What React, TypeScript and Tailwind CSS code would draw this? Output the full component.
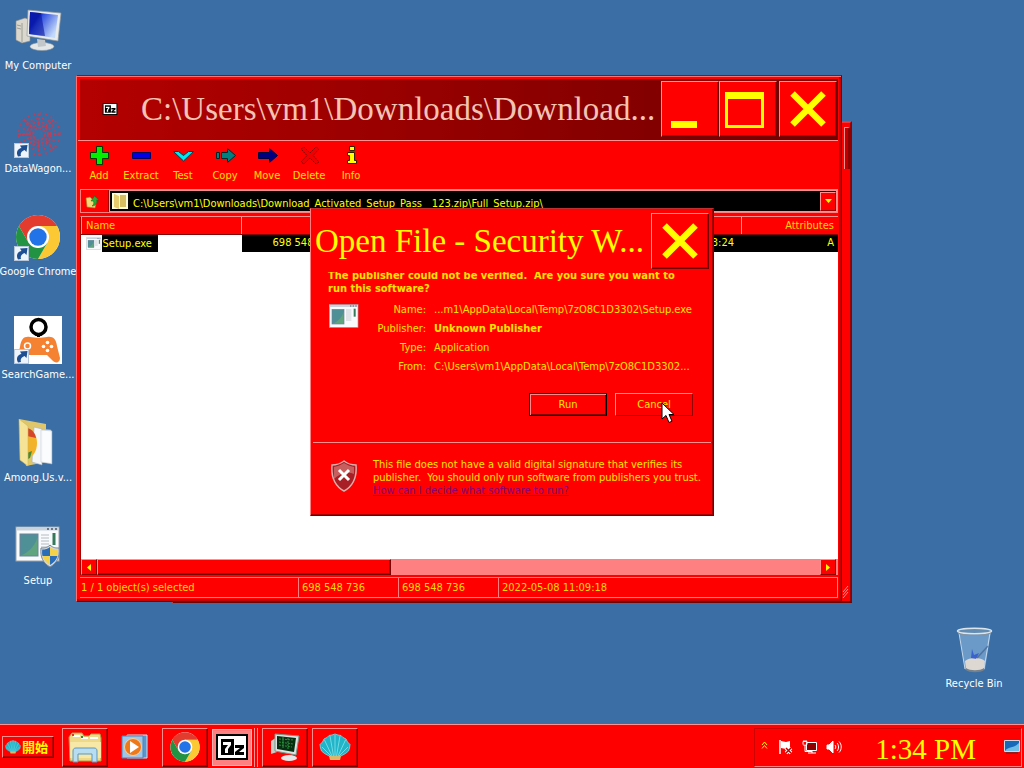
import type { ReactNode } from 'react';

const raised = 'border border-t-[#ff9090] border-l-[#ff9090] border-r-[#900000] border-b-[#900000] bg-[#ff0000]';
const outset = 'border border-t-[#ff9090] border-l-[#ff9090] border-r-[#700000] border-b-[#700000] bg-[#ff0000] shadow-[inset_-1px_-1px_0_#b80000]';

function Shortcut() {
  return (
    <g>
      <rect x="0.5" y="33.5" width="14" height="14" fill="#eef4fb" stroke="#b7c6d8" />
      <path d="M4 46.500C1.500 42 4 38.500 7.500 38L6 35.500l7.500-.5-1 7-2-2C8 41 6 43 7 46z" fill="#1f4f93" />
    </g>
  );
}

function ChromeMark() {
  return (
    <g>
      <circle cx="24" cy="24" r="22" fill="#fff" />
      <path d="M24 13H43.050A22 22 0 0 1 24 46L33.500 29.500z" fill="#fcc934" />
      <path d="M4.950 13A22 22 0 0 1 43.050 13H24L14.500 29.500z" fill="#e33b2e" />
      <path d="M4.950 13 14.500 29.500 24 35 33.500 29.500 24 46A22 22 0 0 1 4.950 13z" fill="#229342" />
      <circle cx="24" cy="24" r="11" fill="#fff" />
      <circle cx="24" cy="24" r="8.700" fill="#2272e8" />
    </g>
  );
}

function ComputerIcon() {
  return (
    <svg viewBox="0 0 48 48" className="size-12">
      <defs>
        <linearGradient id="screen" x1="0" x2="1" y2="0.6">
          <stop offset="0.300" stopColor="#0a1fc0" />
          <stop offset="0.420" stopColor="#3353e0" />
          <stop offset="1" stopColor="#c4dafa" />
        </linearGradient>
      </defs>
      <path d="M2 14l9-3 5 2v21l-8 2-6-3z" fill="#dad8ce" stroke="#8d8f8c" strokeWidth=".6" />
      <path d="M8 16v19M3 18l4 1M3 21l4 1" stroke="#8b8f88" strokeWidth=".8" />
      <ellipse cx="28" cy="39.500" rx="12" ry="4" fill="#e4e7e8" stroke="#8f9799" strokeWidth=".6" />
      <path d="M23 32l8 1 1 6-8 1z" fill="#c2c8ca" />
      <path d="M14 3l33 3-3 28-31-5z" fill="#e8ebeb" stroke="#8f979b" strokeWidth=".7" />
      <path d="M16 5l28 3-3 23-26-4z" fill="url(#screen)" />
      <path d="M16 5l11 1 4 23-16-2z" fill="#08159f" opacity=".6" />
    </svg>
  );
}

function WagonIcon() {
  const rings = [6, 9, 12, 16, 20.5];
  return (
    <svg viewBox="0 0 48 48" className="size-12">
      <g fill="none" stroke="#cc3a50">
        {rings.map((r, i) => (
          <circle key={r} cx="25" cy="24" r={r} strokeWidth={i < 3 ? 2 : 2.2} strokeDasharray={i < 3 ? '3 1.5' : '2 4'} opacity={i < 3 ? 0.75 : 0.8} />
        ))}
        <path d="M25 3v11M25 34v11M4 24h11M35 24h11M10 9l8 8M32 31l8 8M40 9l-8 8M18 31l-8 8" strokeWidth="1.500" strokeDasharray="3 1.500" />
      </g>
      <Shortcut />
    </svg>
  );
}

function GameIcon() {
  return (
    <svg viewBox="0 0 48 48" className="size-12">
      <rect width="48" height="48" fill="#fff" />
      <path d="M6 31c1-8 4-11 10-10 5 1 12 1 17 0 6-1 9 2 10 9l3 12c0 5-5 6-8 2l-5-5H15l-6 6C5 48 2 45 3 42z" fill="#f58233" />
      <circle cx="24.500" cy="11" r="7.500" fill="none" stroke="#000" strokeWidth="3.500" />
      <path d="M24.500 17v4" stroke="#000" strokeWidth="3" />
      <circle cx="13.500" cy="30" r="3" fill="none" stroke="#fff" strokeWidth="1.500" />
      <g fill="#fff"><circle cx="33.500" cy="26.500" r="1.800" /><circle cx="33.500" cy="34.500" r="1.800" /><circle cx="29.500" cy="30.500" r="1.800" /><circle cx="37.500" cy="30.500" r="1.800" /></g>
      <Shortcut />
    </svg>
  );
}

function FolderIcon() {
  return (
    <svg viewBox="0 0 48 48" className="size-12">
      <path d="M5 0l27 5v38L12 47z" fill="#dfc66a" />
      <path d="M25 10l12 1v33l-12-1z" fill="#e9edf2" stroke="#a5b0bd" strokeWidth=".6" />
      <path d="M20 8l8 2v36l-10-3z" fill="#f4f6f8" stroke="#a5b0bd" strokeWidth=".6" />
      <path d="M13 9c7 2 10 8 10 15s-3 14-10 15z" fill="#f2b229" />
      <path d="M13 9c5 1 8 5 9 10l-9-2z" fill="#d5452b" />
      <path d="M13 34l5-2-2 7-4 2z" fill="#498b34" />
      <path d="M5 0l9 7v40l-8-6z" fill="#f5e498" stroke="#cdb75c" strokeWidth=".6" />
      <path d="M27 11l11 1v33l-11-2z" fill="#fff" stroke="#b7c1cc" strokeWidth=".5" opacity=".85" />
    </svg>
  );
}

function ProgramArt() {
  return (
    <g>
      <rect x="2" y="8" width="43" height="34" fill="#f8fafb" stroke="#98a3ad" />
      <rect x="2.500" y="8.500" width="42" height="3" fill="#c9d3de" />
      <path d="M33 10h2m2 0h2m2 0h2" stroke="#4c5a6a" strokeWidth="1.500" />
      <rect x="6" y="15" width="18" height="22" fill="#4f8f96" stroke="#6f829b" />
      <path d="M6.500 36.500c8-3 14-9 17-18v18z" fill="#5fa37f" />
      <path d="M27 16h8M27 19h8M27 22h8M27 25h8M27 28h8M27 31h8" stroke="#b4bcc4" />
      <path d="M40 14v12" stroke="#35785a" strokeWidth="3" />
    </g>
  );
}

function SetupIcon() {
  return (
    <svg viewBox="0 3 48 48" className="size-12">
      <ProgramArt />
      <path d="M36 26c3 3 6 3 9 3 1 9-2 15-9 19-7-4-10-10-9-19 3 0 6 0 9-3z" fill="#d3d9df" stroke="#7a8793" />
      <path d="M36 28v9h-7.500c-.5-2-.5-4-.3-6.500 3 0 5.500-.5 7.800-2.500zM36 37h7.500c-1 4-4 7-7.500 9z" fill="#2b6db6" />
      <path d="M36 28v9h7.500c.5-2 .5-4 .3-6.500-3 0-5.500-.5-7.800-2.500zM36 37h-7.500c1 4 4 7 7.500 9z" fill="#f4d24a" />
    </svg>
  );
}

function BinIcon() {
  return (
    <svg viewBox="0 0 48 48" className="size-12">
      <path d="M9 6h32l-6 38c-1 3-19 3-20 0z" fill="#9cc3ec" opacity=".5" />
      <path d="M15 36c4-4 16-4 20 0l-1 8c-3 3-16 3-18 0z" fill="#ddd8d2" />
      <path d="M9 8l6 36M40 8l-6 36" stroke="#c4d9ec" strokeWidth="1" />
      <path d="M16 43c4 3 14 3 18 0v2c-3 3-15 3-18 0z" fill="#77818a" />
      <path d="M22 24l2 6 5-2-3 6-5-1z" fill="#2a4fd0" opacity=".75" />
      <path d="M38 21L27 33" stroke="#46658c" strokeWidth="1.500" opacity=".7" />
      <ellipse cx="24.500" cy="6" rx="17" ry="2.800" fill="#638cb3" stroke="#dce5ec" strokeWidth="1.500" />
      <path d="M8 8c6 3 26 3 33 0" fill="none" stroke="#8a9299" />
    </svg>
  );
}

function ShellIcon({ className }: { className: string }) {
  return (
    <svg viewBox="0 0 32 32" className={className}>
      <path d="M16 3l3 1 3 .5 2 2 3 1.500 1.500 3L31 13.500l-.5 3.500-1 3-3 2.500L20 26h-8l-6.500-3.500-3-2.500-1-3L1 13.500 3.500 11 5 8l3-1.500 2-2 3-.5z" fill="#22b4c8" stroke="#7fdde4" strokeWidth=".8" />
      <path d="M16 25V4M14.500 25 11 5M13 25 5.500 9M12 25 3 16M17.500 25 21 5M19 25 26.500 9M20 25 29 16" stroke="#85e6ec" strokeWidth=".8" />
      <path d="M10 25h12l-1 4H11z" fill="#d9b86a" />
    </svg>
  );
}

function SevenZip({ className }: { className: string }) {
  return (
    <svg viewBox="0 0 32 26" className={className}>
      <rect x="1" y="1" width="30" height="24" fill="#fff" stroke="#000" strokeWidth="2" />
      <rect x="5" y="5" width="13" height="16" fill="#000" />
      <path d="M7 8h8v3l-3 4v4H9v-4l3-4H7z" fill="#fff" />
      <path d="M19 11h9v3l-5 4h5v3h-9v-3l5-4h-5z" fill="#000" />
    </svg>
  );
}

function DesktopIcon({ label, children }: { label: string; children: ReactNode }) {
  return (
    <button className="flex h-[103px] w-[76px] flex-col items-center gap-1">
      {children}
      <span className="whitespace-nowrap text-[11px] leading-[14px] text-white">{label}</span>
    </button>
  );
}

function CloseGlyph() {
  return (
    <svg viewBox="0 0 36 36" className="size-9">
      <path d="M2.500 2.500l31 31M33.500 2.500L2.500 33.500" stroke="#ff0" strokeWidth="6.500" />
    </svg>
  );
}

const tools: { name: string; art: ReactNode }[] = [
  { name: 'Add', art: <path d="M9.500 1.500h6v6h6v6h-6v6h-6v-6h-6v-6h6z" fill="#00f000" stroke="#003800" /> },
  { name: 'Extract', art: <path d="M3.500 7.500h18v6h-18z" fill="#0000e8" stroke="#000060" /> },
  { name: 'Test', art: <path d="M2.500 6.500h5l5 4 5-4h5l-10 9.500z" fill="#00e8f0" stroke="#004050" /> },
  { name: 'Copy', art: <path d="M3.500 7.500h3v6h-3zm5 0h6v-4l8 7-8 7v-4h-6z" fill="#008080" stroke="#002828" /> },
  { name: 'Move', art: <path d="M3.500 7.500h11v-4l8 7-8 7v-4h-11z" fill="#000080" stroke="#000040" /> },
  { name: 'Delete', art: <path d="M4 4l3-2 6 6 6-6 3 2-6 6.500L22 17l-3 2-6-6-6 6-3-2 6-6.500z" fill="#f00000" stroke="#800000" strokeDasharray="2 1" /> },
  { name: 'Info', art: <g fill="#ff0" stroke="#302000"><path d="M10.500 1.500h5v4h-5z" /><path d="M8.500 7.500h7v8h2v3h-9v-3h2v-5h-2z" /></g> },
];

function ArchiveWindow() {
  return (
    <section className="absolute left-[76px] top-[75px] flex h-[527px] w-[766px] flex-col border border-l-[#ff7070] border-t-[#b00020] border-r-[#800000] border-b-[#800000] bg-[#ff0000] p-[3px] shadow-[inset_0_1px_0_#ff7070,inset_-2px_-2px_0_#c00000]">
      <header className="flex h-[61px] items-center bg-linear-to-r from-[#b40000] to-[#740000] pb-0.5 pr-px">
        <SevenZip className="ml-[22px] mr-[23px] h-3 w-4 shrink-0" />
        <h1 className="min-w-0 flex-1 overflow-hidden whitespace-nowrap font-['Liberation_Serif',serif] text-[33px] leading-[56px] text-[#f3c4b4]">C:\Users\vm1\Downloads\Download...</h1>
        <button aria-label="Minimize" className={`flex h-14 w-[58px] shrink-0 items-center ${outset}`}>
          <svg viewBox="0 0 56 54" className="h-[54px] w-14"><path d="M9 39h26v7H9z" fill="#ff0" /></svg>
        </button>
        <button aria-label="Maximize" className={`flex h-14 w-[58px] shrink-0 items-center ${outset}`}>
          <svg viewBox="0 0 56 54" className="h-[54px] w-14"><path d="M5 10h39v36H5zM8 17v26h33V17z" fill="#ff0" fillRule="evenodd" /></svg>
        </button>
        <button aria-label="Close" className={`ml-0.5 flex h-14 w-[58px] shrink-0 items-center justify-center ${outset}`}><CloseGlyph /></button>
      </header>
      <nav className="-ml-0.5 flex h-[49px] border-t border-[#ff9090] pt-1">
        {tools.map((t) => (
          <button key={t.name} className="flex w-[42px] flex-col items-center gap-0.5 text-[11px] text-[#ffe000]">
            <svg viewBox="0 0 24 21" className="h-[21px] w-6">{t.art}</svg>
            <span className="leading-4">{t.name}</span>
          </button>
        ))}
      </nav>
      <div className="flex h-6 border border-[#ff8080]">
        <button aria-label="Up" className="flex w-7 items-center justify-center border-r border-[#a00000]">
          <svg viewBox="0 0 16 16" className="mr-1 size-4"><path d="M1 5l4-1 2 2h5l-2 9-8-1z" fill="#f3d778" stroke="#a77c20" strokeWidth=".6" /><path d="M7 13c2-1 2-3 1.500-5H6l3.500-5L14 7h-2.500c.5 3-1 6-4.500 6z" fill="#28ac32" stroke="#0c6420" strokeWidth=".5" /></svg>
        </button>
        <div className="flex min-w-0 flex-1 items-center border border-[#ff9090] bg-black">
          <svg viewBox="0 0 16 16" className="ml-0.5 size-4 shrink-0"><path d="M0 0h16v16H0z" fill="#fffbd8" /><path d="M2 1l5 2v13l-5-2z" fill="#e7cb6c" /><path d="M8 2h6v12H8z" fill="#d6bd62" /></svg>
          <input aria-label="Path" readOnly value="C:\Users\vm1\Downloads\Download_Activated_Setup_Pass__123.zip\Full_Setup.zip\" className="h-full min-w-0 flex-1 bg-black pl-[5px] pt-1 text-[11px] text-[#ff0] outline-none" />
          <button aria-label="Show paths" className={`flex h-[19px] w-4 items-center justify-center ${raised}`}><svg viewBox="0 0 7 4" className="h-1 w-[7px]"><path d="M0 0h7L3.500 4z" fill="#ff0" /></svg></button>
        </div>
      </div>
      <div className="mt-[3px] flex min-h-0 flex-1 flex-col border-t border-l border-t-[#ff9090] border-l-[#a00000] bg-white">
        <table className="w-full table-fixed border-collapse text-[11px]">
          <colgroup><col className="w-[160px]" /><col className="w-[100px]" /><col /><col className="w-[97px]" /></colgroup>
          <thead>
            <tr className="h-[17px] bg-[#ff0000] text-[#ffd800]">
              {['Name', '', '', 'Attributes'].map((h, i) => (
                <th key={i} className={`border-l border-b border-l-[#ff9090] border-b-[#800000] p-0 pt-0.5 font-normal leading-[14px] ${i === 0 ? 'pl-1 text-left' : 'pr-1 text-right'}`}>{h}</th>
              ))}
            </tr>
          </thead>
          <tbody>
            <tr className="h-[17px] text-[#ff0]">
              <td className="p-0">
                <div className="flex items-center pl-1">
                  <svg viewBox="0 7 48 36" className="h-[13px] w-4"><ProgramArt /></svg>
                  <span className="bg-black pl-px pr-1.5 leading-[17px]">Setup.exe</span>
                </div>
              </td>
              <td className="bg-black p-0 pr-1.5 text-right">698 548 736</td>
              <td className="bg-black p-0 pr-[7px] text-right">13:24</td>
              <td className="bg-black p-0 pr-1 text-right">A</td>
            </tr>
          </tbody>
        </table>
        <div className="mt-auto flex h-4 bg-[#ff8080]">
          <button aria-label="Scroll left" className={`flex w-4 items-center justify-center ${raised}`}><svg viewBox="0 0 4 7" className="h-[7px] w-1"><path d="M4 0v7L0 3.500z" fill="#ff0" /></svg></button>
          <div className={`w-[294px] ${outset}`} />
          <button aria-label="Scroll right" className={`ml-auto mr-0.5 flex w-4 items-center justify-center ${raised}`}><svg viewBox="0 0 4 7" className="h-[7px] w-1"><path d="M0 0v7l4-3.500z" fill="#ff0" /></svg></button>
        </div>
      </div>
      <footer className="mt-0.5 flex h-[21px] items-center border-y border-[#ff8080] text-[11px] leading-[19px] text-[#ffd800]">
        <span className="w-[218px] pl-px">1 / 1 object(s) selected</span>
        <span className="w-[100px] border-l border-[#ff8080] pl-[3px]">698 548 736</span>
        <span className="w-[100px] border-l border-[#ff8080] pl-[3px]">698 548 736</span>
        <span className="flex-1 border-x border-[#ff8080] pl-[3px]">2022-05-08 11:09:18</span>
      </footer>
    </section>
  );
}

function SecurityDialog() {
  const rows = [
    ['Name:', '...m1\\AppData\\Local\\Temp\\7zO8C1D3302\\Setup.exe'],
    ['Publisher:', 'Unknown Publisher'],
    ['Type:', 'Application'],
    ['From:', 'C:\\Users\\vm1\\AppData\\Local\\Temp\\7zO8C1D3302...'],
  ];
  return (
    <section role="dialog" aria-label="Open File - Security Warning" className="absolute left-[310px] top-[208px] h-[308px] w-[404px] border border-t-[#c03030] border-l-[#ff8080] border-r-[#700000] border-b-[#700000] bg-[#ff0000] p-0.5 text-[11px] leading-[13px] text-[#ffe400] shadow-[inset_-1px_-1px_0_#a00000]">
      <header className="flex h-[61px] items-center pb-0.5 pr-0.5">
        <h2 className="min-w-0 flex-1 whitespace-nowrap pl-0.5 font-['Liberation_Serif',serif] text-[33px] leading-[56px] text-[#ff0]">Open File - Security W...</h2>
        <button aria-label="Close" className={`flex h-14 w-[58px] shrink-0 items-center justify-center ${outset}`}><CloseGlyph /></button>
      </header>
      <div className="flex h-[23px] items-end overflow-hidden pl-[15px]">
        <p className="font-bold">The publisher could not be verified.&nbsp; Are you sure you want to<br />run this software?</p>
      </div>
      <div className="flex pl-[15px] pt-[5px]">
        <svg viewBox="0 7 48 36" className="mt-1 h-6 w-8 shrink-0"><ProgramArt /></svg>
        <dl className="ml-2.5 grid flex-1 grid-cols-[56px_1fr] gap-x-2">
          {rows.map(([k, v], i) => (
            <div key={k} className="contents">
              <dt className="flex h-[19px] items-center justify-end">{k}</dt>
              <dd className={`flex h-[19px] items-center whitespace-nowrap ${i === 1 ? 'font-bold' : ''}`}>{v}</dd>
            </div>
          ))}
        </dl>
      </div>
      <div className="mt-[17px] flex justify-end gap-2 pr-[18px]">
        <button className="h-[23px] w-[78px] border border-black shadow-[inset_1px_1px_0_#ff9090,inset_-1px_-1px_0_#800000]">Run</button>
        <button className={`h-[23px] w-[78px] ${raised}`}>Cancel</button>
      </div>
      <div className="mt-[26px] flex gap-4 border-t border-[#ff9090] pl-[18px] pt-[15px]">
        <svg viewBox="0 0 26 32" className="mt-0.5 h-8 w-[26px] shrink-0">
          <path d="M13 1c4 3 7 4 12 4 1 12-3 21-12 26C4 26 0 17 1 5c5 0 8-1 12-4z" fill="#a81f25" stroke="#d8b0ac" strokeWidth="1.500" />
          <path d="M13 3c3 2 6 3 10 4v7C16 11 8 14 3 19V7c4-1 7-2 10-4z" fill="#d47a78" opacity=".7" />
          <path d="M8 10l10 10M18 10L8 20" stroke="#fff" strokeWidth="3" />
        </svg>
        <p className="whitespace-nowrap">
          This file does not have a valid digital signature that verifies its<br />publisher.&nbsp; You should only run software from publishers you trust.<br />
          <a href="#help" className="text-[#800080] underline">How can I decide what software to run?</a>
        </p>
      </div>
    </section>
  );
}

function Taskbar() {
  const task = 'flex h-[39px] w-[46px] shrink-0 items-center justify-center';
  return (
    <footer className="flex h-11 shrink-0 items-center border-t border-[#ff9090] bg-[#ff0000] px-0.5 pt-px shadow-[0_-1px_0_#c04040]">
      <button className={`flex h-[22px] w-[52px] items-center gap-px pl-0.5 font-['Noto_Sans_CJK_JP',sans-serif] text-[13px] font-bold leading-5 text-[#ff0] ${outset}`}>
        <ShellIcon className="size-4 shrink-0" /><span className="whitespace-nowrap">開始</span>
      </button>
      <div className="ml-2 flex items-center gap-1">
        <button aria-label="Explorer" className={`${task} ${outset}`}>
          <svg viewBox="0 0 34 34" className="size-[34px]"><path d="M1 7l3-4h10l2 3h5l2-2h9l1 4v23H2z" fill="#eed889" stroke="#b69945" /><path d="M5 6h7M13 8h7M22 8h8" stroke="#fff" strokeWidth="2" /><path d="M4 5h2" stroke="#d33" strokeWidth="2" /><path d="M13 7h2" stroke="#383" strokeWidth="2" /><path d="M2 12h31v16H2z" fill="#f7e8a8" /><path d="M5 21c0-2 1-3 3-3h18c2 0 3 1 3 3v11h-5v-8H10v8H5z" fill="#b8dcf0" stroke="#5e98bd" /></svg>
        </button>
        <button aria-label="Media Player" className={`${task} border border-transparent`}>
          <svg viewBox="0 0 28 28" className="size-7"><path d="M6 2h20v23H6z" fill="#5a96cc" stroke="#cfe3f2" /><path d="M1 3h21v22H1z" fill="#9fc6e6" stroke="#4d86b8" /><circle cx="12" cy="14" r="8.500" fill="#ee7919" stroke="#f8d0a0" /><path d="M9 8l9 6-9 6z" fill="#fff" /></svg>
        </button>
        <button aria-label="Google Chrome" className={`${task} ${outset}`}><svg viewBox="0 0 48 48" className="size-8"><ChromeMark /></svg></button>
      </div>
      <div className="ml-1 flex h-[39px] items-center gap-0.5">
        <button aria-label="7-Zip" className="flex h-[37px] w-10 items-center justify-center border border-[#ffb0b0] bg-[#ff8080]"><SevenZip className="h-[26px] w-8" /></button>
        <span className="h-full w-1 border-x border-[#ff9090]" />
      </div>
      <div className="ml-1 flex gap-1">
        <button aria-label="System Monitor" className={`${task} ${outset}`}>
          <svg viewBox="0 0 32 32" className="size-8"><path d="M2 10l6-4v15l-6 2z" fill="#c9cbc5" /><ellipse cx="20" cy="27" rx="8" ry="3" fill="#e4e6e8" /><path d="M6 3l24 2-3 19-21-4z" fill="#dde2e2" stroke="#798" /><path d="M8 5l19 2-2 14-17-3z" fill="#082e12" /><path d="M10 8l15 1M10 11l14 2M10 14l13 2M14 6v12M19 7v12" stroke="#2b8d3c" strokeDasharray="2 1" /></svg>
        </button>
        <button aria-label="Shell" className={`${task} ${outset}`}><ShellIcon className="size-8" /></button>
      </div>
      <div className="ml-auto flex h-[39px] w-[268px] items-center border border-[#ff8080] border-l-[#d00000] border-t-[#d00000] pl-[6px] pr-px">
        <button aria-label="Show hidden icons"><svg viewBox="0 0 7 8" className="mb-1 h-2 w-[7px]"><path d="M1 4l2.500-3L6 4M1 7.500l2.500-3 2.500 3" fill="none" stroke="#ff0" /></svg></button>
        <svg viewBox="0 0 16 16" className="ml-2.5 size-4"><path d="M2 1v14" stroke="#fff" strokeWidth="1.500" /><path d="M3 2l5 1 4-1v7l-4 1-5-1z" fill="#fff" /><path d="M8 9l5 5M13 9l-5 5" stroke="#fff" strokeWidth="3.500" /><path d="M8 9l5 5M13 9l-5 5" stroke="#c00000" strokeWidth="1.500" /></svg>
        <svg viewBox="0 0 16 16" className="ml-2 size-4" fill="none" stroke="#fff"><path d="M4.500 3.500h10v8h-10z" fill="#900000" /><path d="M1 2.500h4v3c0 1-4 1-4 0zM2 1v1.500M4 1v1.500M3 6v6.500h7M6 14h8M10 12v2" /></svg>
        <svg viewBox="0 0 16 16" className="ml-2 size-4" fill="none" stroke="#fff"><path d="M1 6h2l4-4v12l-4-4H1z" fill="#fff" /><path d="M9 6c1 1 1 3 0 4M11 4c2 2 2 6 0 8M13 2.500c3 3 3 8 0 11" /></svg>
        <time className="ml-auto mr-7 pt-1 font-['Liberation_Serif',serif] text-[29px] leading-8 text-[#ff0]">1:34 PM</time>
        <button aria-label="Show desktop"><svg viewBox="0 0 16 14" className="h-3.5 w-4"><path d="M.5 .5h15v11H.5z" fill="#1768b8" stroke="#cbd9e5" /><path d="M1 11c3-5 8-2 14-8v8z" fill="#6dbde7" /><path d="M2 13h12" stroke="#333" /></svg></button>
      </div>
    </footer>
  );
}

export default function App() {
  return (
    <div className="flex h-screen flex-col overflow-hidden bg-[#3a6ea5] font-['DejaVu_Sans_Condensed','DejaVu_Sans',sans-serif]">
      <main className="relative flex min-h-0 flex-1 justify-between">
        <div className="flex flex-col pt-[7px]">
          <DesktopIcon label="My Computer"><ComputerIcon /></DesktopIcon>
          <DesktopIcon label="DataWagon..."><WagonIcon /></DesktopIcon>
          <DesktopIcon label="Google Chrome"><svg viewBox="0 0 48 48" className="size-12"><ChromeMark /><Shortcut /></svg></DesktopIcon>
          <DesktopIcon label="SearchGame..."><GameIcon /></DesktopIcon>
          <DesktopIcon label="Among.Us.v..."><FolderIcon /></DesktopIcon>
          <DesktopIcon label="Setup"><SetupIcon /></DesktopIcon>
        </div>
        <div className="-mb-1 flex items-end pr-3">
          <DesktopIcon label="Recycle Bin"><BinIcon /></DesktopIcon>
        </div>
        <div className="absolute left-[172px] top-[121px] h-[482px] w-[680px] border-2 border-t-[#ff3030] border-l-[#ff8080] border-r-[#900000] border-b-[#700000] bg-[#ff0000]">
          <div className="ml-auto mt-1 h-[42px] w-1.5 border-t border-l border-t-[#ff9090] border-l-[#ff9090] border-r-2 border-r-[#900000] bg-[#c00000]" />
          <svg viewBox="0 0 7 14" className="absolute bottom-0.5 right-px h-3.5 w-[7px]" stroke="#ff9090"><path d="M1 7l5-6M1 10l5-6M1 13l5-6" /></svg>
        </div>
        <ArchiveWindow />
        <SecurityDialog />
        <svg viewBox="0 0 14 22" className="absolute left-[661px] top-[402px] h-[22px] w-3.5"><path d="M1 1v16l4-3.500 3 7 3-1.300-3-6.700h5z" fill="#fff" stroke="#000" /></svg>
      </main>
      <Taskbar />
    </div>
  );
}
